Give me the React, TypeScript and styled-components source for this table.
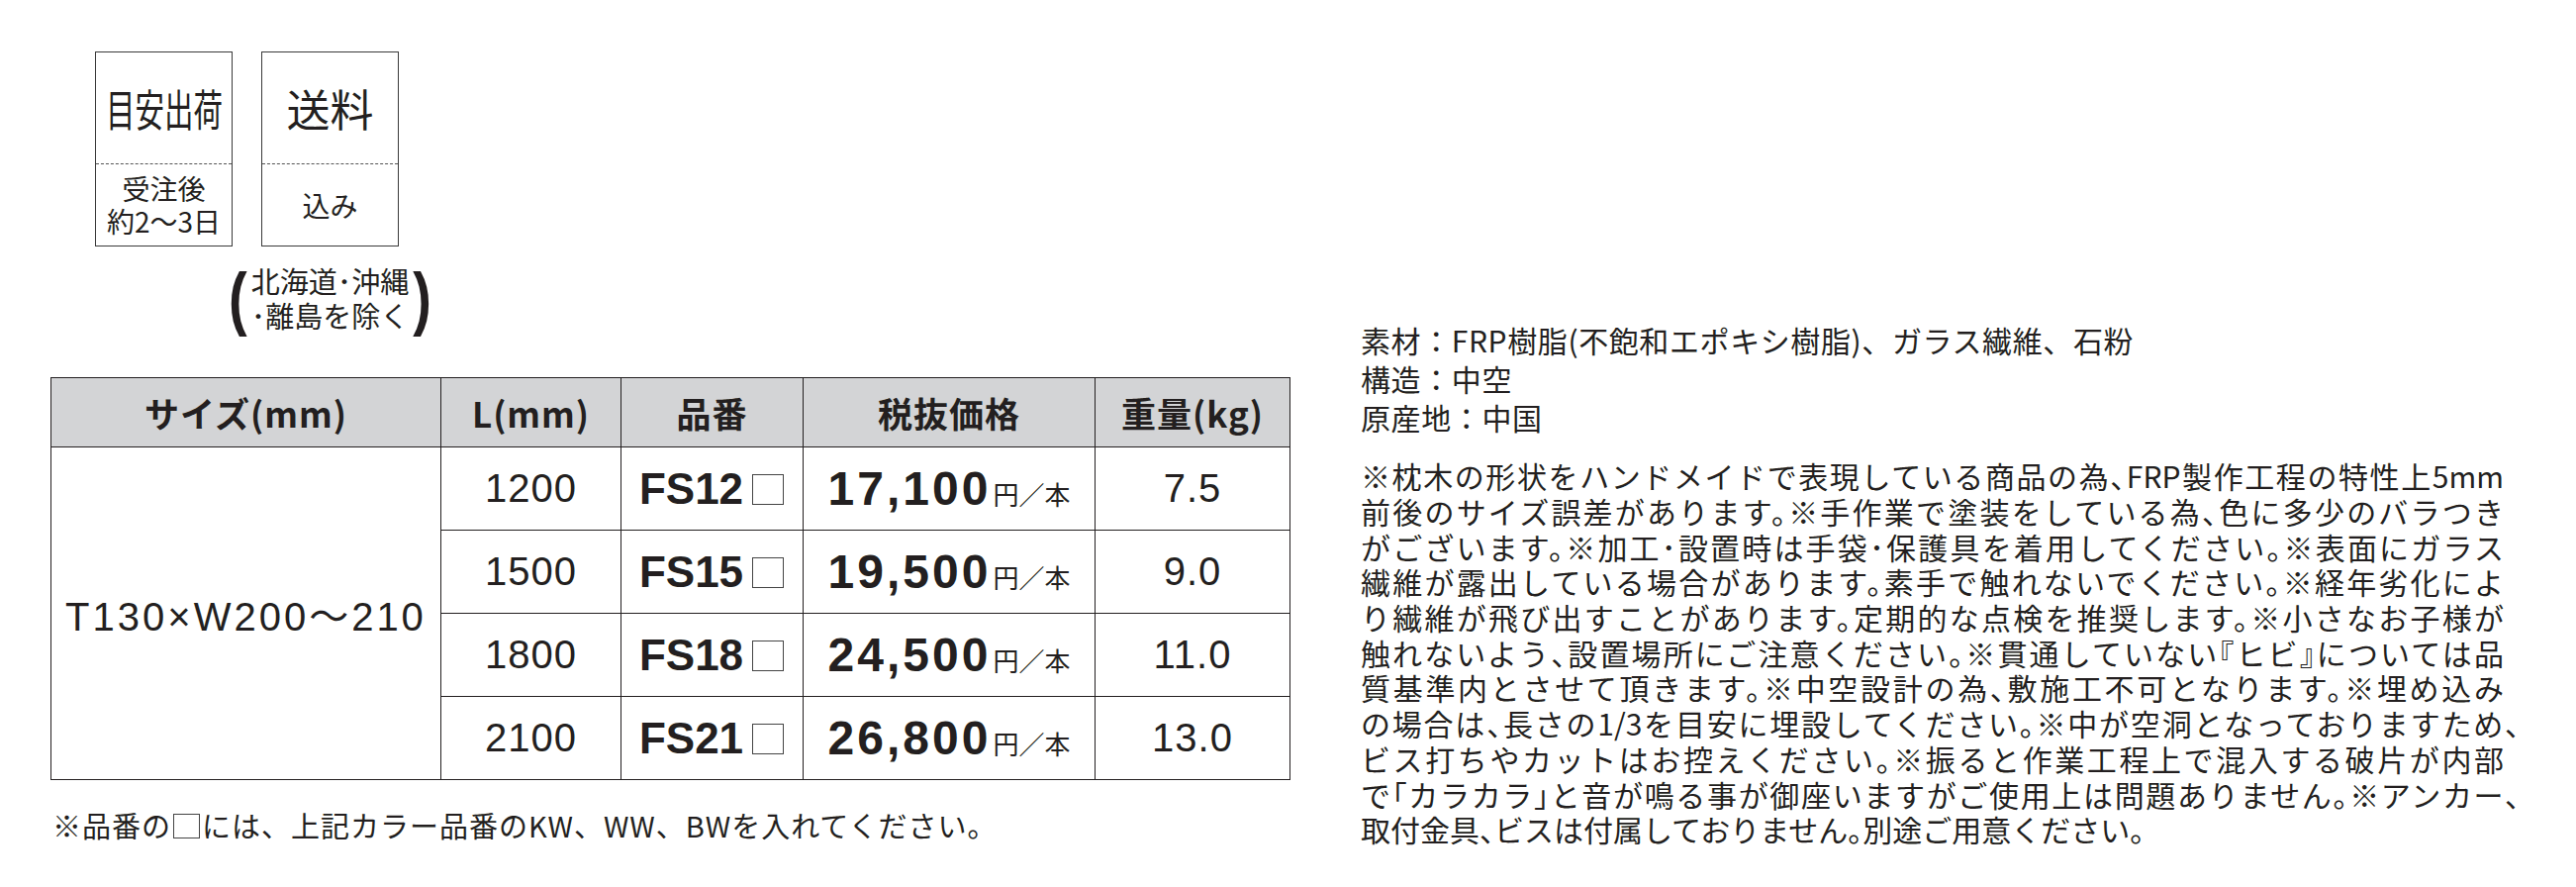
import React from "react";
import styled, { createGlobalStyle } from "styled-components";

const JP = `"Noto Sans CJK JP", "Noto Sans", sans-serif`;
const LATIN = `"Liberation Sans", "Noto Sans CJK JP", sans-serif`;
const INK = "#231f20";

const GlobalStyle = createGlobalStyle`
  html, body {
    margin: 0;
    padding: 0;
    background: #fff;
  }
  body {
    font-family: ${JP};
    color: ${INK};
  }
`;

const Page = styled.div`
  display: flex;
  width: 2603px;
  height: 896px;
  box-sizing: border-box;
  padding: 52px 0 0 51px;
  overflow: hidden;
`;

const LeftColumn = styled.div`
  display: flex;
  flex-direction: column;
  width: 1252px;
  flex-shrink: 0;
`;

const ShipRow = styled.div`
  display: flex;
  align-items: flex-start;
  gap: 29px;
  margin-left: 45px;
`;

const ShipItem = styled.div`
  display: flex;
  flex-direction: column;
  align-items: center;
  width: 139px;
`;

const InfoBox = styled.div`
  display: flex;
  flex-direction: column;
  box-sizing: border-box;
  width: 139px;
  height: 197px;
  border: 1px solid #3a3a3a;
`;

const InfoTitle = styled.div`
  display: flex;
  align-items: center;
  justify-content: center;
  height: 112px;
  font-size: 44px;
  line-height: 1;
`;

const Squeeze = styled.span<{ $x: number }>`
  display: inline-block;
  white-space: nowrap;
  transform: scaleX(${(p) => p.$x});
`;

const InfoValue = styled.div`
  flex: 1;
  display: flex;
  flex-direction: column;
  align-items: center;
  justify-content: center;
  border-top: 1px dashed #555;
  font-size: 28px;
  line-height: 33px;
  white-space: nowrap;
`;

const Note = styled.div`
  display: flex;
  align-items: center;
  gap: 4px;
  margin-top: 17px;
  height: 70px;
`;

const Paren = styled.span`
  display: inline-block;
  font-family: ${LATIN};
  font-weight: 700;
  font-size: 56px;
  line-height: 1;
  transform: scaleY(1.25);
`;

const NoteText = styled.div`
  font-size: 29px;
  line-height: 35px;
  text-align: center;
  white-space: nowrap;
`;

const PriceTable = styled.table`
  margin-top: 45px;
  width: 1252px;
  border-collapse: collapse;
  table-layout: fixed;
`;

const Th = styled.th`
  height: 69px;
  padding: 0;
  background: #d3d4d6;
  border: 1px solid ${INK};
  font-family: ${JP};
  font-weight: 700;
  font-size: 35px;
  letter-spacing: 1px;
  text-align: center;
  vertical-align: middle;
`;

const Td = styled.td<{ $size?: number; $spacing?: number }>`
  height: 83px;
  padding: 0;
  border: 1px solid ${INK};
  font-family: ${LATIN};
  font-size: ${(p) => p.$size ?? 40}px;
  letter-spacing: ${(p) => p.$spacing ?? 1}px;
  text-align: center;
  vertical-align: middle;
  white-space: nowrap;
`;

const Code = styled.span`
  font-weight: 700;
  font-size: 44px;
  letter-spacing: 0;
`;

const ColorSlot = styled.span<{ $w: number; $h: number; $gap?: number }>`
  display: inline-block;
  box-sizing: border-box;
  width: ${(p) => p.$w}px;
  height: ${(p) => p.$h}px;
  border: 1px solid #444;
  margin: 0 ${(p) => p.$gap ?? 1}px 0 ${(p) => p.$gap ?? 9}px;
  vertical-align: -1px;
`;

const Price = styled.span`
  font-weight: 700;
  font-size: 48px;
  letter-spacing: 3px;
`;

const Unit = styled.span`
  font-family: ${JP};
  font-size: 26px;
  letter-spacing: 0;
  margin-left: 2px;
`;

const Footnote = styled.p`
  margin: 27px 0 0 2px;
  font-size: 29px;
  line-height: 36px;
  letter-spacing: 1px;
  white-space: nowrap;
`;

const RightColumn = styled.div`
  align-self: flex-end;
  flex-shrink: 0;
  width: 1155px;
  margin-left: 72px;
  padding-bottom: 40px;
`;

const Specs = styled.div`
  font-size: 30px;
  line-height: 39px;
  letter-spacing: 0.6px;
  white-space: nowrap;
`;

const Caution = styled.div`
  margin-top: 22px;
  font-size: 30px;
  line-height: 35.7px;
  font-feature-settings: "halt";
`;

const CautionLine = styled.div<{ $last?: boolean; $hang?: boolean }>`
  text-align: ${(p) => (p.$last ? "left" : "justify")};
  text-align-last: ${(p) => (p.$last ? "left" : "justify")};
  margin-right: ${(p) => (p.$hang ? "-16px" : "0")};
`;

const rows = [
  { length: "1200", code: "FS12", price: "17,100", weight: "7.5" },
  { length: "1500", code: "FS15", price: "19,500", weight: "9.0" },
  { length: "1800", code: "FS18", price: "24,500", weight: "11.0" },
  { length: "2100", code: "FS21", price: "26,800", weight: "13.0" },
];

const cautionLines = [
  "※枕木の形状をハンドメイドで表現している商品の為、FRP製作工程の特性上5mm",
  "前後のサイズ誤差があります。※手作業で塗装をしている為、色に多少のバラつき",
  "がございます。※加工･設置時は手袋･保護具を着用してください。※表面にガラス",
  "繊維が露出している場合があります。素手で触れないでください。※経年劣化によ",
  "り繊維が飛び出すことがあります。定期的な点検を推奨します。※小さなお子様が",
  "触れないよう、設置場所にご注意ください。※貫通していない『ヒビ』については品",
  "質基準内とさせて頂きます。※中空設計の為、敷施工不可となります。※埋め込み",
  "の場合は、長さの1/3を目安に埋設してください。※中が空洞となっておりますため、",
  "ビス打ちやカットはお控えください。※振ると作業工程上で混入する破片が内部",
  "で「カラカラ」と音が鳴る事が御座いますがご使用上は問題ありません。※アンカー、",
  "取付金具、ビスは付属しておりません。別途ご用意ください。",
];

const App = () => {
  return (
    <>
      <GlobalStyle />
      <Page>
        <LeftColumn>
          <ShipRow>
            <ShipItem>
              <InfoBox>
                <InfoTitle>
                  <Squeeze $x={0.67}>目安出荷</Squeeze>
                </InfoTitle>
                <InfoValue>
                  <span>受注後</span>
                  <span>約2〜3日</span>
                </InfoValue>
              </InfoBox>
            </ShipItem>
            <ShipItem>
              <InfoBox>
                <InfoTitle>送料</InfoTitle>
                <InfoValue>込み</InfoValue>
              </InfoBox>
              <Note>
                <Paren>(</Paren>
                <NoteText>
                  北海道･沖縄
                  <br />
                  ･離島を除く
                </NoteText>
                <Paren>)</Paren>
              </Note>
            </ShipItem>
          </ShipRow>

          <PriceTable>
            <colgroup>
              <col style={{ width: 394 }} />
              <col style={{ width: 182 }} />
              <col style={{ width: 184 }} />
              <col style={{ width: 295 }} />
              <col style={{ width: 197 }} />
            </colgroup>
            <thead>
              <tr>
                <Th>サイズ(mm)</Th>
                <Th>L(mm)</Th>
                <Th>品番</Th>
                <Th>税抜価格</Th>
                <Th>重量(kg)</Th>
              </tr>
            </thead>
            <tbody>
              {rows.map((row, i) => (
                <tr key={row.code}>
                  {i === 0 && (
                    <Td rowSpan={rows.length} $size={40} $spacing={3}>
                      T130×W200〜210
                    </Td>
                  )}
                  <Td>{row.length}</Td>
                  <Td>
                    <Code>{row.code}</Code>
                    <ColorSlot $w={32} $h={31} />
                  </Td>
                  <Td>
                    <Price>{row.price}</Price>
                    <Unit>円／本</Unit>
                  </Td>
                  <Td>{row.weight}</Td>
                </tr>
              ))}
            </tbody>
          </PriceTable>

          <Footnote>
            ※品番の<ColorSlot $w={27} $h={25} $gap={2} />
            には、上記カラー品番のKW、WW、BWを入れてください。
          </Footnote>
        </LeftColumn>

        <RightColumn>
          <Specs>
            <div>素材：FRP樹脂(不飽和エポキシ樹脂)、ガラス繊維、石粉</div>
            <div>構造：中空</div>
            <div>原産地：中国</div>
          </Specs>
          <Caution>
            {cautionLines.map((line, i) => (
              <CautionLine
                key={i}
                $last={i === cautionLines.length - 1}
                $hang={line.endsWith("、")}
              >
                {line}
              </CautionLine>
            ))}
          </Caution>
        </RightColumn>
      </Page>
    </>
  );
};

export default App;
